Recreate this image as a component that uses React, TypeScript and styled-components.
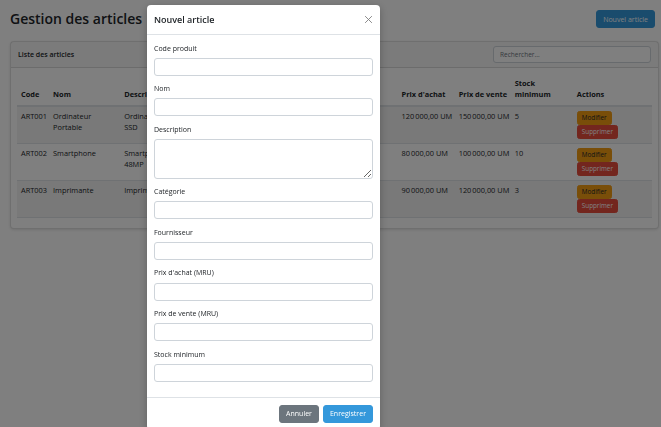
import styled, { createGlobalStyle } from "styled-components";

const GlobalStyle = createGlobalStyle`
  * {
    box-sizing: border-box;
  }
  html, body {
    margin: 0;
    height: 100%;
    overflow: hidden;
    background: #fff;
  }
  body {
    font-family: "Open Sans", "Noto Sans", sans-serif;
    font-size: 7px;
    line-height: 11.3px;
    color: #212529;
  }
`;

const colors = {
  primary: "#3498db",
  secondary: "#6c757d",
  warning: "#f39c12",
  danger: "#e74c3c",
};

type Variant = keyof typeof colors;

const Page = styled.div`
  padding: 10px 2px 0 10px;
`;

const TopBar = styled.div`
  display: flex;
  justify-content: space-between;
  align-items: center;
  height: 18px;
  padding-right: 4px;
  margin-bottom: 13px;
`;

const Title = styled.h1`
  margin: 0;
  font-size: 14px;
  font-weight: 600;
  line-height: 20px;
`;

const Button = styled.button<{ $variant: Variant; $small?: boolean }>`
  display: inline-flex;
  align-items: center;
  justify-content: center;
  height: ${(p) => (p.$small ? "14px" : "18px")};
  padding: ${(p) => (p.$small ? "0 4px" : "0 6px")};
  font-family: inherit;
  font-size: ${(p) => (p.$small ? "6.3px" : "7px")};
  border: 1px solid ${(p) => colors[p.$variant]};
  border-radius: ${(p) => (p.$small ? "2.5px" : "3px")};
  background: ${(p) => colors[p.$variant]};
  color: ${(p) => (p.$variant === "warning" ? "#212529" : "#fff")};
  cursor: pointer;
`;

const Card = styled.div`
  background: #fff;
  border: 1px solid rgba(0, 0, 0, 0.125);
  border-radius: 4px;
  box-shadow: 0 1px 3px rgba(0, 0, 0, 0.12);
`;

const CardHeader = styled.div`
  height: 26px;
  display: flex;
  align-items: center;
  justify-content: space-between;
  padding: 0 7px;
  background: rgba(0, 0, 0, 0.03);
  border-bottom: 1px solid rgba(0, 0, 0, 0.125);
`;

const CardTitle = styled.span`
  font-weight: 600;
  font-size: 7px;
`;

const SearchInput = styled.input`
  width: 158px;
  height: 17px;
  padding: 0 6px;
  font-family: inherit;
  font-size: 6.5px;
  border: 1px solid #ced4da;
  border-radius: 3px;
  &::placeholder {
    color: #6c757d;
  }
`;

const CardBody = styled.div`
  padding: 6px 6px 10px;
`;

const Table = styled.table`
  width: 100%;
  border-collapse: collapse;
  table-layout: fixed;
  font-size: 7.4px;

  th {
    padding: 4px;
    text-align: left;
    vertical-align: bottom;
    font-weight: 700;
    white-space: nowrap;
    border-bottom: 2px solid #dee2e6;
  }

  tbody tr:nth-child(odd) {
    background: rgba(0, 0, 0, 0.05);
  }
  tbody tr:last-child td {
    border-bottom: 1px solid #dee2e6;
  }
`;

const Cell = styled.td<{ $nowrap?: boolean }>`
  padding: 4px;
  vertical-align: top;
  border-top: 1px solid #dee2e6;
  white-space: ${(p) => (p.$nowrap ? "nowrap" : "pre-line")};
`;

const ActionStack = styled.div`
  display: flex;
  flex-direction: column;
  align-items: flex-start;
`;

const Backdrop = styled.div`
  position: fixed;
  inset: 0;
  background: rgba(0, 0, 0, 0.5);
`;

const Modal = styled.div`
  position: fixed;
  left: 147px;
  top: 5px;
  width: 233px;
  background: #fff;
  border-radius: 4px;
  box-shadow: 0 2px 8px rgba(0, 0, 0, 0.25);
`;

const ModalHeader = styled.div`
  height: 30px;
  display: flex;
  align-items: center;
  justify-content: space-between;
  padding: 0 7px;
  border-bottom: 1px solid #dee2e6;
`;

const ModalTitle = styled.h5`
  margin: 0;
  font-size: 9px;
  font-weight: 600;
`;

const CloseButton = styled.button`
  display: flex;
  padding: 0;
  border: 0;
  background: none;
  opacity: 0.5;
  cursor: pointer;
`;

const ModalBody = styled.div`
  padding: 7.5px 7px;
`;

const Field = styled.div`
  margin-bottom: 7.5px;
`;

const Label = styled.label`
  display: block;
  margin-bottom: 3.8px;
`;

const Input = styled.input`
  display: block;
  width: 100%;
  height: 18px;
  padding: 0 6px;
  font-family: inherit;
  font-size: 7px;
  border: 1px solid #ced4da;
  border-radius: 3px;
`;

const TextArea = styled.textarea`
  display: block;
  width: 100%;
  height: 40px;
  padding: 3px 6px;
  font-family: inherit;
  font-size: 7px;
  border: 1px solid #ced4da;
  border-radius: 3px;
  resize: vertical;
`;

const ModalFooter = styled.div`
  display: flex;
  justify-content: flex-end;
  gap: 4px;
  padding: 7px;
  border-top: 1px solid #dee2e6;
`;

interface IArticle {
  code: string;
  nom: string;
  description: string;
  categorie: string;
  fournisseur: string;
  prixAchat: string;
  prixVente: string;
  stockMin: number;
}

const articles: IArticle[] = [
  {
    code: "ART001",
    nom: "Ordinateur Portable",
    description: "Ordinateur 16 Go RAM\nSSD",
    categorie: "Informatique",
    fournisseur: "Tech Support",
    prixAchat: "120\u202f000,00 UM",
    prixVente: "150\u202f000,00 UM",
    stockMin: 5,
  },
  {
    code: "ART002",
    nom: "Smartphone",
    description: "Smartphone 128 Go\n48MP",
    categorie: "Téléphonie",
    fournisseur: "Phone World",
    prixAchat: "80\u202f000,00 UM",
    prixVente: "100\u202f000,00 UM",
    stockMin: 10,
  },
  {
    code: "ART003",
    nom: "Imprimante",
    description: "Imprimante laser",
    categorie: "Informatique",
    fournisseur: "Office Pro",
    prixAchat: "90\u202f000,00 UM",
    prixVente: "120\u202f000,00 UM",
    stockMin: 3,
  },
];

const fields = [
  "Code produit",
  "Nom",
  "Description",
  "Catégorie",
  "Fournisseur",
  "Prix d'achat (MRU)",
  "Prix de vente (MRU)",
  "Stock minimum",
];

function App() {
  return (
    <>
      <GlobalStyle />
      <Page>
        <TopBar>
          <Title>Gestion des articles</Title>
          <Button $variant="primary">Nouvel article</Button>
        </TopBar>
        <Card>
          <CardHeader>
            <CardTitle>Liste des articles</CardTitle>
            <SearchInput placeholder="Rechercher..." />
          </CardHeader>
          <CardBody>
            <Table>
              <colgroup>
                <col style={{ width: 32 }} />
                <col style={{ width: 71 }} />
                <col style={{ width: 96 }} />
                <col style={{ width: 80 }} />
                <col style={{ width: 101 }} />
                <col style={{ width: 57 }} />
                <col style={{ width: 56 }} />
                <col style={{ width: 62 }} />
                <col style={{ width: 79 }} />
              </colgroup>
              <thead>
                <tr>
                  <th>Code</th>
                  <th>Nom</th>
                  <th>Description</th>
                  <th>Catégorie</th>
                  <th>Fournisseur</th>
                  <th>Prix d'achat</th>
                  <th>Prix de vente</th>
                  <th>
                    Stock
                    <br />
                    minimum
                  </th>
                  <th>Actions</th>
                </tr>
              </thead>
              <tbody>
                {articles.map((a) => (
                  <tr key={a.code}>
                    <Cell $nowrap>{a.code}</Cell>
                    <Cell>{a.nom}</Cell>
                    <Cell>{a.description}</Cell>
                    <Cell>{a.categorie}</Cell>
                    <Cell>{a.fournisseur}</Cell>
                    <Cell $nowrap>{a.prixAchat}</Cell>
                    <Cell $nowrap>{a.prixVente}</Cell>
                    <Cell>{a.stockMin}</Cell>
                    <Cell>
                      <ActionStack>
                        <Button $variant="warning" $small>
                          Modifier
                        </Button>
                        <Button $variant="danger" $small>
                          Supprimer
                        </Button>
                      </ActionStack>
                    </Cell>
                  </tr>
                ))}
              </tbody>
            </Table>
          </CardBody>
        </Card>
      </Page>
      <Backdrop />
      <Modal>
        <ModalHeader>
          <ModalTitle>Nouvel article</ModalTitle>
          <CloseButton aria-label="Fermer">
            <svg width="9" height="9" viewBox="0 0 16 16">
              <path d="M2 2 L14 14 M14 2 L2 14" stroke="#000" strokeWidth="1.6" />
            </svg>
          </CloseButton>
        </ModalHeader>
        <ModalBody>
          {fields.map((f) => (
            <Field key={f}>
              <Label>{f}</Label>
              {f === "Description" ? <TextArea /> : <Input />}
            </Field>
          ))}
        </ModalBody>
        <ModalFooter>
          <Button $variant="secondary">Annuler</Button>
          <Button $variant="primary">Enregistrer</Button>
        </ModalFooter>
      </Modal>
    </>
  );
}

export default App;
